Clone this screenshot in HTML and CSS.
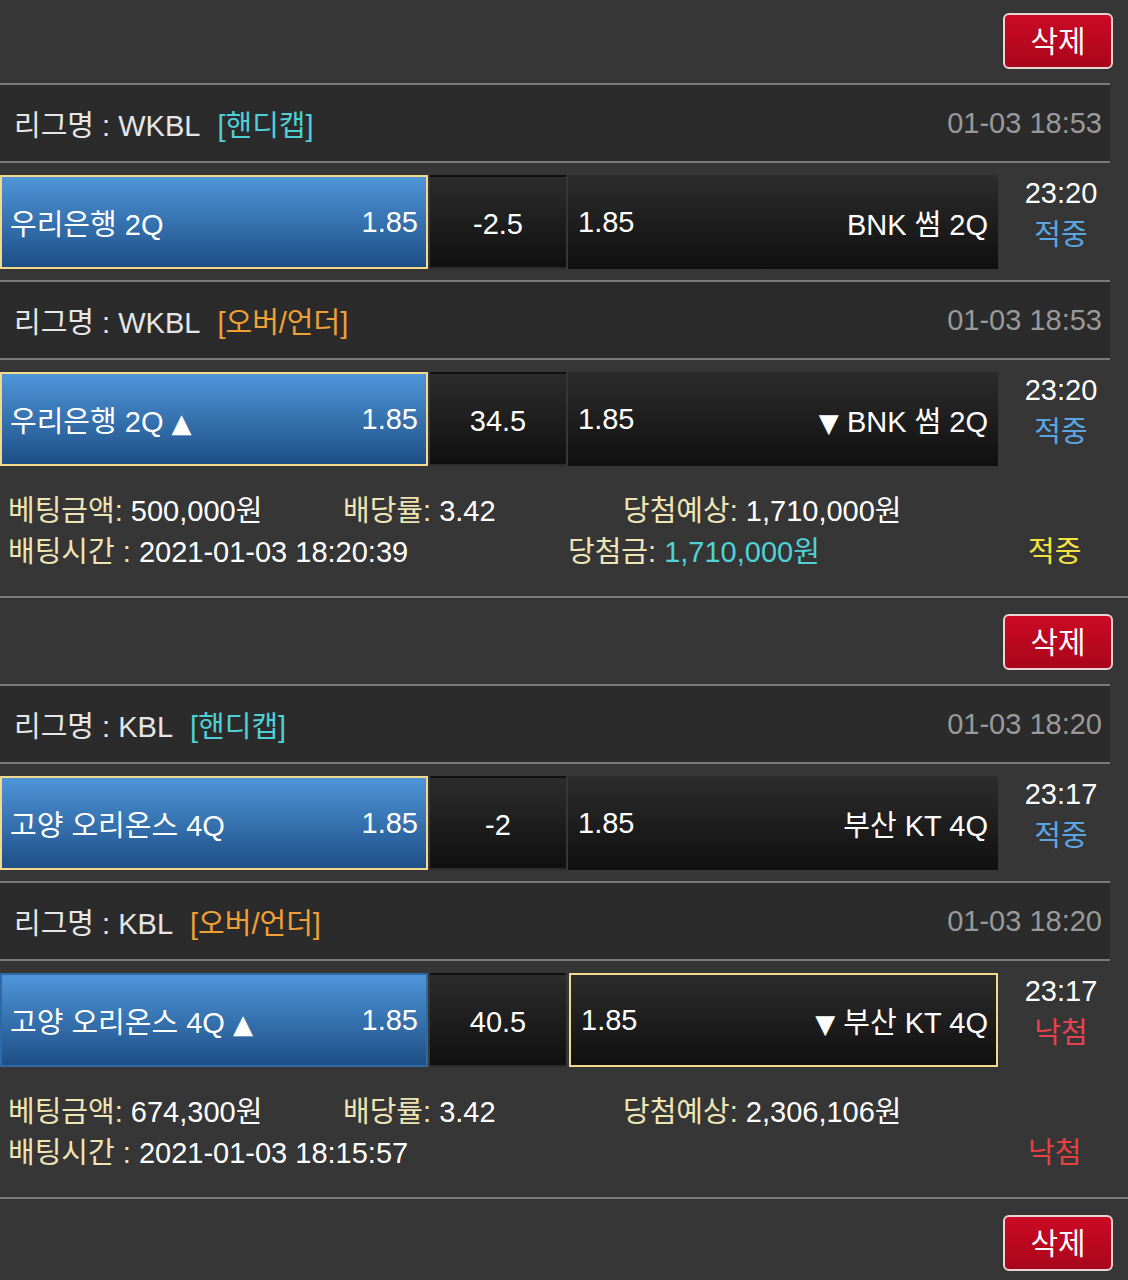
FILE: index.html
```html
<!doctype html>
<html lang="ko">

<head>
  <meta charset="UTF-8" />
  <meta name="viewport" content="width=device-width, initial-scale=1.0" />
  <title>베팅내역</title>
  <link rel="stylesheet" href="styles.css">
</head>

<body>
  <div class="list">

    <div class="bet first">
      <div class="bet-top">
        <button class="btn-delete">삭제</button>
      </div>

      <div class="league">
        <div class="league-name">리그명 : WKBL <span class="type handicap">[핸디캡]</span></div>
        <div class="league-date">01-03 18:53</div>
      </div>
      <div class="match">
        <div class="cell home picked">
          <span>우리은행 2Q</span>
          <span>1.85</span>
        </div>
        <div class="cell line">-2.5</div>
        <div class="cell away">
          <span>1.85</span>
          <span>BNK 썸 2Q</span>
        </div>
        <div class="result">
          <div class="result-time">23:20</div>
          <div class="result-status win">적중</div>
        </div>
      </div>

      <div class="league">
        <div class="league-name">리그명 : WKBL <span class="type overunder">[오버/언더]</span></div>
        <div class="league-date">01-03 18:53</div>
      </div>
      <div class="match">
        <div class="cell home picked">
          <span>우리은행 2Q <span class="arrow">▲</span></span>
          <span>1.85</span>
        </div>
        <div class="cell line">34.5</div>
        <div class="cell away">
          <span>1.85</span>
          <span><span class="arrow">▼</span> BNK 썸 2Q</span>
        </div>
        <div class="result">
          <div class="result-time">23:20</div>
          <div class="result-status win">적중</div>
        </div>
      </div>

      <div class="info">
        <div class="info-row top">
          <div><span class="label">베팅금액:</span> 500,000원</div>
          <div><span class="label">배당률:</span> 3.42</div>
          <div><span class="label">당첨예상:</span> 1,710,000원</div>
        </div>
        <div class="info-row bottom">
          <div><span class="label">배팅시간 :</span> 2021-01-03 18:20:39</div>
          <div><span class="label">당첨금:</span> <span class="prize">1,710,000원</span></div>
          <div class="state win">적중</div>
        </div>
      </div>
    </div>

    <div class="bet">
      <div class="bet-top">
        <button class="btn-delete">삭제</button>
      </div>

      <div class="league">
        <div class="league-name">리그명 : KBL <span class="type handicap">[핸디캡]</span></div>
        <div class="league-date">01-03 18:20</div>
      </div>
      <div class="match">
        <div class="cell home picked">
          <span>고양 오리온스 4Q</span>
          <span>1.85</span>
        </div>
        <div class="cell line">-2</div>
        <div class="cell away">
          <span>1.85</span>
          <span>부산 KT 4Q</span>
        </div>
        <div class="result">
          <div class="result-time">23:17</div>
          <div class="result-status win">적중</div>
        </div>
      </div>

      <div class="league">
        <div class="league-name">리그명 : KBL <span class="type overunder">[오버/언더]</span></div>
        <div class="league-date">01-03 18:20</div>
      </div>
      <div class="match">
        <div class="cell home">
          <span>고양 오리온스 4Q <span class="arrow">▲</span></span>
          <span>1.85</span>
        </div>
        <div class="cell line">40.5</div>
        <div class="cell away picked">
          <span>1.85</span>
          <span><span class="arrow">▼</span> 부산 KT 4Q</span>
        </div>
        <div class="result">
          <div class="result-time">23:17</div>
          <div class="result-status lose">낙첨</div>
        </div>
      </div>

      <div class="info">
        <div class="info-row top">
          <div><span class="label">베팅금액:</span> 674,300원</div>
          <div><span class="label">배당률:</span> 3.42</div>
          <div><span class="label">당첨예상:</span> 2,306,106원</div>
        </div>
        <div class="info-row bottom">
          <div><span class="label">배팅시간 :</span> 2021-01-03 18:15:57</div>
          <div></div>
          <div class="state lose">낙첨</div>
        </div>
      </div>
    </div>

    <div class="bet">
      <div class="bet-top">
        <button class="btn-delete">삭제</button>
      </div>
    </div>

  </div>
</body>

</html>
```

FILE: styles.css
```css
body {
  margin: 0;
  background-color: #363636;
  font-family: 'Liberation Sans', 'Noto Sans CJK KR', sans-serif;
  color: #ffffff;
  overflow: hidden;
}

.list {
  width: 1128px;
}

.bet.first {
  margin-top: -3px;
}

.bet-top {
  height: 86px;
  display: flex;
  justify-content: flex-end;
  align-items: center;
  padding-right: 15px;
  box-sizing: border-box;
}

.btn-delete {
  width: 110px;
  height: 56px;
  border: 2px solid #e9d3d3;
  border-radius: 6px;
  background: linear-gradient(#cc0a24, #a9061b);
  color: #ffffff;
  font-family: 'Liberation Sans', 'Noto Sans CJK KR', sans-serif;
  font-size: 30px;
  padding: 0 0 3px;
  margin-top: 1px;
  cursor: pointer;
}

/* league header */
.league {
  width: 1088px;
  height: 76px;
  border-top: 2px solid #7a7a7a;
  background-color: #2b2b2b;
  display: flex;
  justify-content: space-between;
  align-items: center;
  padding: 0 8px 0 14px;
  box-sizing: content-box;
  font-size: 29px;
}

.league-name {
  color: #e6e6e6;
}

.type {
  margin-left: 10px;
}

.type.handicap {
  color: #4fcfd6;
}

.type.overunder {
  color: #f0a035;
}

.league-date {
  color: #9a9a9a;
}

/* match row */
.match {
  width: 1110px;
  height: 119px;
  border-top: 2px solid #7a7a7a;
  display: flex;
  gap: 2px;
  padding: 12px 0 11px;
  box-sizing: border-box;
  font-size: 29px;
}

.match:last-of-type {
  height: 118px;
}

.cell {
  display: flex;
  justify-content: space-between;
  align-items: center;
  box-sizing: border-box;
  background: linear-gradient(#2c2c2c, #101010);
  border: 2px solid transparent;
}

.cell.home {
  width: 428px;
  padding: 0 8px;
  background: linear-gradient(#4e95d9, #1e4f86);
  border-color: #2f6aa8;
}

.cell.line {
  width: 136px;
  justify-content: center;
  padding-top: 4px;
}

.cell.away {
  width: 430px;
  border: none;
  padding: 0 10px;
}

.cell.picked {
  border: 2px solid #f3d98c;
}

.cell.away.picked {
  margin-left: 1px;
  width: 429px;
  padding: 0 8px 0 10px;
}

.arrow {
  font-family: 'DejaVu Sans', sans-serif;
  font-size: 26px;
}

.result {
  flex: 1;
  text-align: center;
  padding-left: 12px;
  margin-top: -2px;
}

.result-time {
  line-height: 40px;
}

.result-status {
  line-height: 44px;
}

.result-status.win {
  color: #5aa6e2;
}

.result-status.lose {
  color: #e84250;
}

/* bet summary */
.info {
  height: 121px;
  border-bottom: 2px solid #7a7a7a;
  padding: 10px 0 0 8px;
  box-sizing: border-box;
  font-size: 29px;
}

.info-row {
  display: grid;
  height: 41px;
  align-items: center;
}

.info-row.top {
  grid-template-columns: 335px 280px 1fr;
}

.info-row.bottom {
  grid-template-columns: 560px 460px 1fr;
}

.label {
  color: #efe4b4;
}

.prize {
  color: #4fd3d6;
}

.state.win {
  color: #f4e23e;
}

.state.lose {
  color: #e8403e;
}
```
